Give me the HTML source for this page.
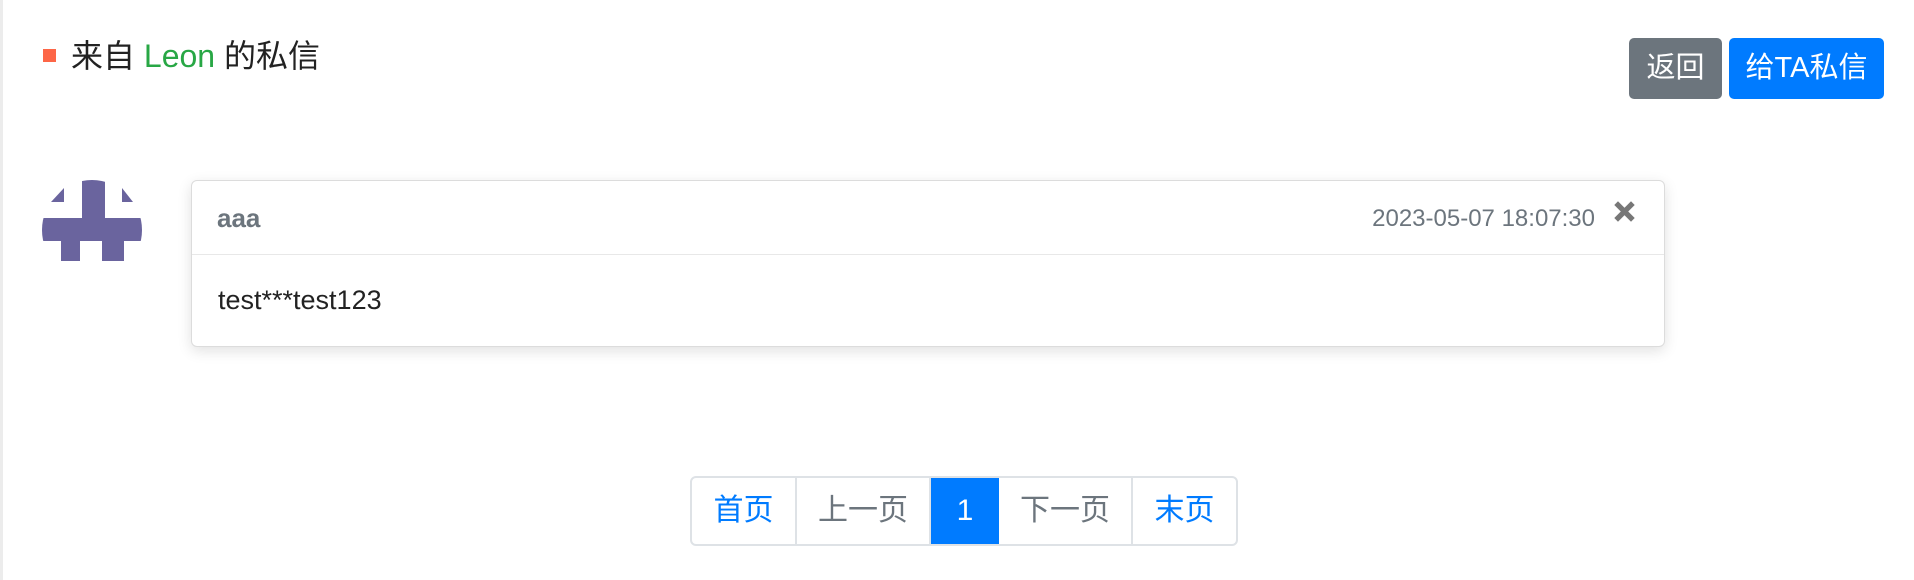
<!DOCTYPE html>
<html><head><meta charset="utf-8"><style>
*{margin:0;padding:0;box-sizing:border-box}
body{width:1914px;height:580px;background:#fff;font-family:"Liberation Sans","Noto Sans CJK SC",sans-serif;position:relative;overflow:hidden;border-left:3px solid #ececec}
.a{position:absolute}
.sq{left:40px;top:49px;width:13px;height:13px;background:#fd6647}
.title{left:68px;top:37px;font-size:32px;color:#222;line-height:38px}
.btn{top:38px;height:61px;border-radius:5px;color:#fff;font-size:29px;line-height:61px;text-align:center}
.card{left:188px;top:180px;width:1474px;height:167px;border:1px solid #dcdcdc;border-radius:6px;box-shadow:0 4px 14px rgba(0,0,0,.12);background:#fff}
.hd{height:74px;border-bottom:1px solid #e8e8e8;position:relative}
.pg{top:476px;left:687px;width:548px;height:70px;border:2px solid #dee2e6;border-radius:6px;display:flex;overflow:hidden}
.pg div{font-size:30px;line-height:66px;text-align:center;border-right:2px solid #dee2e6}
</style></head><body>
<div class="a sq"></div>
<div class="a title">来自 <span style="color:#28a745">Leon</span> 的私信</div>
<div class="a btn" style="left:1626px;width:93px;background:#6c757d">返回</div>
<div class="a btn" style="left:1726px;width:155px;background:#007bff">给TA私信</div>
<svg class="a" style="left:39px;top:180px" width="100" height="81" viewBox="0 0 100 81">
<defs><clipPath id="c"><circle cx="50" cy="50" r="50"/></clipPath></defs>
<g fill="#6a649e">
<g clip-path="url(#c)">
<rect x="40" y="0" width="23" height="40"/>
<rect x="0" y="38" width="100" height="23"/>
<rect x="19" y="60" width="19" height="21"/>
<rect x="60" y="60" width="22" height="21"/>
</g>
<polygon points="9,22 22,8 22,22"/><polygon points="80,8 91,22 80,22"/>
</g></svg>
<div class="a card">
<div class="hd">
<div class="a" style="left:25px;top:22px;font-size:26px;font-weight:bold;color:#6c757d">aaa</div>
<div class="a" style="right:69px;top:24px;font-size:24px;color:#6c757d">2023-05-07 18:07:30</div>
<svg class="a" style="right:28px;top:19px" width="23" height="23" viewBox="0 0 22 22"><path d="M3 3L19 19M19 3L3 19" stroke="#777" stroke-width="5"/></svg>
</div>
<div class="a" style="left:26px;top:104px;font-size:27px;color:#222">test***test123</div>
</div>
<div class="a pg">
<div style="width:105px;color:#007bff">首页</div>
<div style="width:134px;color:#6c757d">上一页</div>
<div style="width:68px;color:#fff;background:#007bff;border-right:none">1</div>
<div style="width:134px;color:#6c757d">下一页</div>
<div style="flex:1;color:#007bff;border-right:none">末页</div>
</div>
</body></html>
